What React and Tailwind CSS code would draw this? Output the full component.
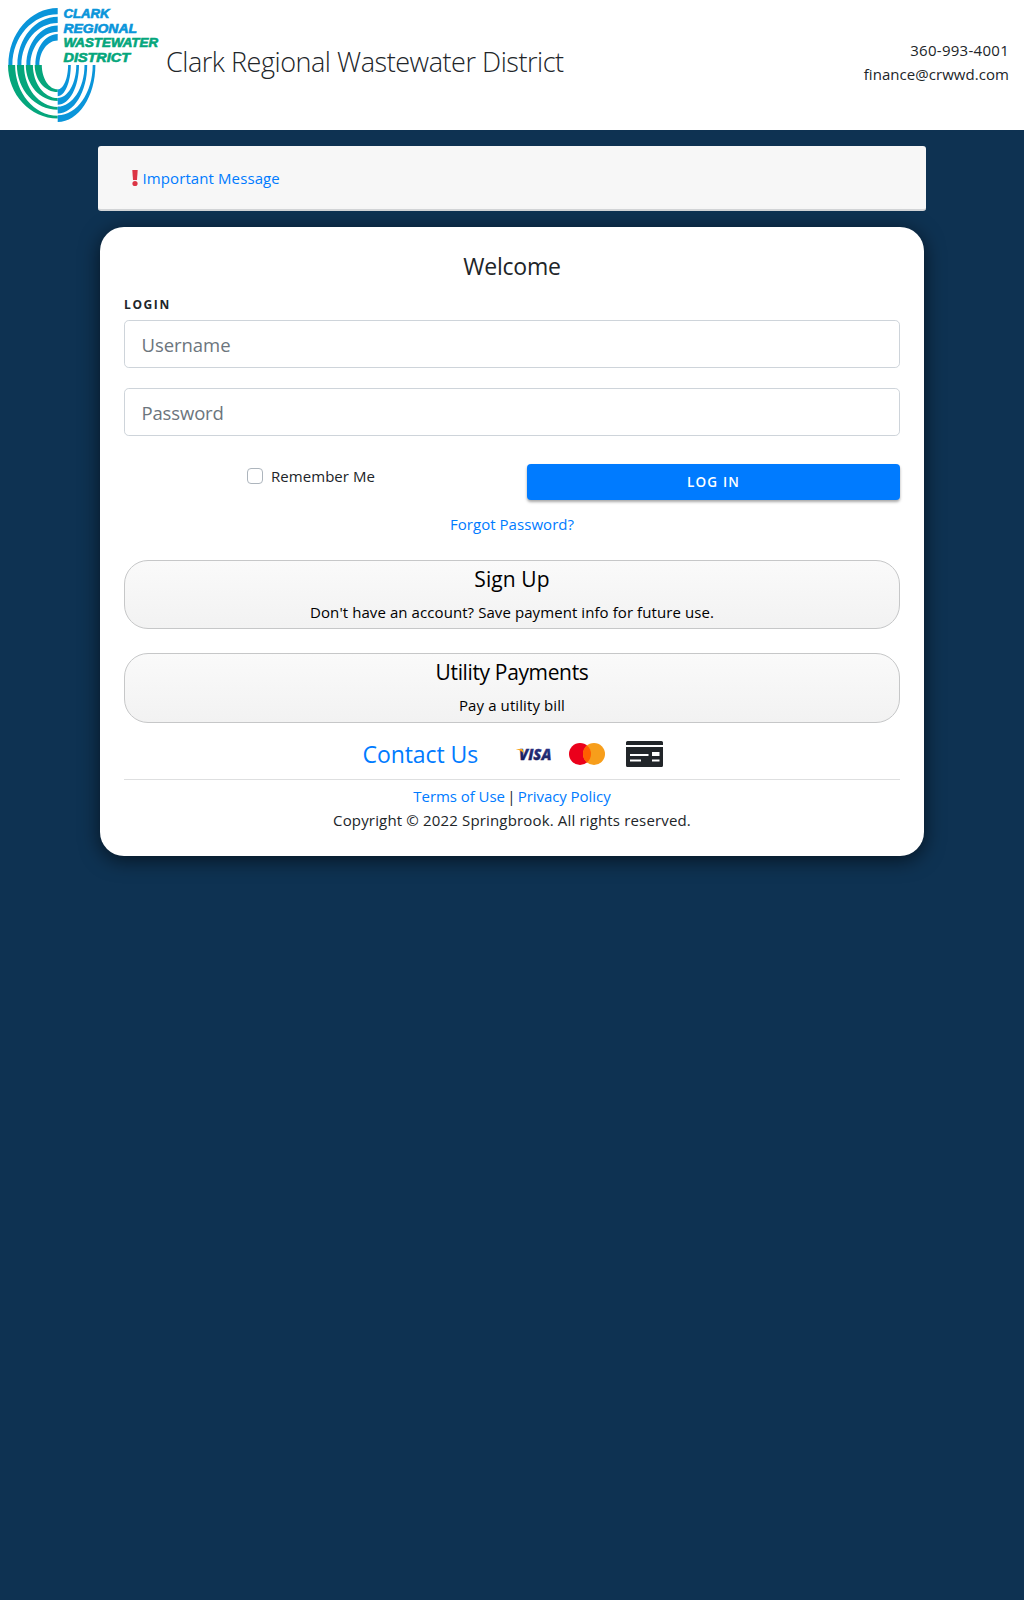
const CX = 57.7;
const CY = 65;

// Quarter ring around the logo's centre, tapering between its two ends.
function Ring({ sx, sy, oa, ob, ia, ib, fill }) {
  const k = 0.5523;
  const p = (x, y) => `${CX + sx * x} ${CY + sy * y}`;
  const d = `M${p(0, ob)}C${p(oa * k, ob)} ${p(oa, ob * k)} ${p(oa, 0)}L${p(ia, 0)}C${p(ia, ib * k)} ${p(ia * k, ib)} ${p(0, ib)}Z`;
  return <path d={d} fill={fill} />;
}

const BLUE = "#0a95da";
const GREEN = "#05a67c";

const words = [
  ["CLARK", 17.6, 46, BLUE],
  ["REGIONAL", 33.2, 73.5, BLUE],
  ["WASTEWATER", 46.6, 94.5, GREEN],
  ["DISTRICT", 61.8, 66.5, GREEN],
];

function Logo() {
  return (
    <svg width="160" height="130" viewBox="0 0 160 130" className="block shrink-0">
      {[0, 1, 2, 3].map((i) => (
        <g key={i}>
          <Ring sx={-1} sy={-1} oa={49.3 - i * 9} ob={57 - i * 8.7} ia={45.3 - i * 9} ib={50.7 - i * 8.7} fill={BLUE} />
          <Ring sx={-1} sy={1} oa={49.7 - i * 8.9} ob={53.5 - i * 8.8} ia={42.6 - i * 8.9} ib={50.7 - i * 8.8} fill={GREEN} />
          <Ring sx={1} sy={1} oa={37.7 - i * 8.2} ob={57 - i * 8.6} ia={35 - i * 8.2} ib={50.2 - i * 8.6} fill={BLUE} />
        </g>
      ))}
      {words.map(([t, y, w, c]) => (
        <text key={t} x="63.5" y={y} textLength={w} lengthAdjust="spacingAndGlyphs" fill={c} stroke={c} strokeWidth="0.6" className="font-['Liberation_Sans',sans-serif] text-[12px] font-bold italic">
          {t}
        </text>
      ))}
    </svg>
  );
}

function Cards() {
  return (
    <>
      <svg width="40" height="28" viewBox="0 -4 40 28" className="ml-[37.500px] mt-[5px] overflow-visible">
        <defs>
          <linearGradient id="visa" x1="0" y1="1" x2="0.3" y2="0">
            <stop offset="0" stopColor="#14174f" />
            <stop offset="1" stopColor="#293688" />
          </linearGradient>
        </defs>
        <text x="3" y="15" textLength="32.500" lengthAdjust="spacingAndGlyphs" fill="url(#visa)" stroke="url(#visa)" strokeWidth="0.3" className="font-['Open_Sans',sans-serif] text-[15.5px] font-extrabold italic">
          VISA
        </text>
        <path d="M0.2 4H5.4C6.2 4 6.8 4.400 7 5.200L7.800 9C6.600 6.600 4 4.900 0.200 4.300Z" fill="#f7a51c" />
      </svg>
      <svg width="36" height="22" viewBox="0 0 36 22" className="ml-[13.500px] mt-[7px]">
        <circle cx="11" cy="11" r="11" fill="#eb001b" />
        <circle cx="25" cy="11" r="11" fill="#f79e1b" />
        <path d="M18 2.5a11 11 0 0 1 0 17a11 11 0 0 1 0-17z" fill="#ff5f00" />
      </svg>
      <svg width="37" height="26" viewBox="0 0 37 26" className="ml-[21px] mt-[5px]">
        <path d="M1.5 0h34A1.5 1.5 0 0 1 37 1.5V4H0V1.5A1.5 1.5 0 0 1 1.5 0z" fill="#212529" />
        <path fillRule="evenodd" d="M0 6H37V24.5A1.5 1.5 0 0 1 35.5 26H1.5A1.5 1.5 0 0 1 0 24.500zM4 13v2H22.500v-2zM4 18.500v2H15v-2zM26 11v4H33.500v-4zM26 18.500v2H33.500v-2z" fill="#212529" />
      </svg>
    </>
  );
}

function Choice({ title, text, className, titleClass, textClass }) {
  return (
    <button type="button" className={`flex w-full flex-col items-center justify-start rounded-[24px] border border-[#c6c7c8] bg-linear-to-b from-[#fafafa] to-[#f2f2f2] pt-[5px] text-black ${className}`}>
      <span className={`block text-[21px] leading-[26px] ${titleClass}`}>{title}</span>
      <span className={`mt-2 block leading-6 ${textClass}`}>{text}</span>
    </button>
  );
}

export default function App() {
  return (
    <div className="min-h-[1600px] bg-[#0e3252] font-['Open_Sans','Noto_Sans',sans-serif] text-[15px] leading-6 text-[#212529]">
      <header className="flex h-[130px] bg-white">
        <Logo />
        <h1 className="ml-[6px] mt-[42px] whitespace-nowrap text-[27px] font-light leading-10 tracking-[-0.460px]">Clark Regional Wastewater District</h1>
        <div className="ml-auto mr-[15px] mt-[38px] text-right">
          <div className="tracking-[0.280px]">360-993-4001</div>
          <div className="tracking-[0.050px]">finance@crwwd.com</div>
        </div>
      </header>

      <section className="mx-[98px] mt-4 flex h-[65px] rounded-[3px] border-b-2 border-[#d3d5d7] bg-[#f7f7f7] pl-[34px] pt-5">
        <svg width="6" height="17" viewBox="0 0 6 17" className="mt-1">
          <path d="M0.300 0H5.700L5 10H1z" fill="#dc3545" />
          <circle cx="3" cy="13.500" r="2.600" fill="#dc3545" />
        </svg>
        <a href="#" className="ml-[4.500px] tracking-[0.100px] text-[#007bff]">Important Message</a>
      </section>

      <main className="mx-[100px] mt-4 h-[629px] rounded-[24px] bg-white px-6 pt-6 shadow-[0_4px_20px_rgba(0,0,0,0.6)]">
        <h2 className="mb-[15px] text-center text-[23px] leading-[30px] tracking-[-0.200px]">Welcome</h2>
        <div className="mb-[6px] text-[12px] font-bold leading-[18px] tracking-[1.600px]">LOGIN</div>
        <input type="text" placeholder="Username" className="mb-5 block h-12 w-full rounded-[4.800px] border border-[#ced4da] px-[16.500px] text-[18.500px] tracking-[-0.050px] placeholder:text-[#6c757d]" />
        <input type="password" placeholder="Password" className="block h-12 w-full rounded-[4.800px] border border-[#ced4da] px-[16.500px] text-[18.500px] tracking-[-0.150px] placeholder:text-[#6c757d]" />
        <div className="mt-7 flex h-9">
          <label className="flex w-[403px] pl-[123px]">
            <input type="checkbox" className="mt-1 size-4 appearance-none rounded-[4px] border border-[#adb5bd] bg-white" />
            <span className="ml-2 tracking-[0.050px]">Remember Me</span>
          </label>
          <button type="button" className="h-9 flex-1 rounded-[4px] bg-[#007bff] text-[13.500px] font-semibold tracking-[1.200px] text-white shadow-[0_2px_3px_rgba(0,0,0,0.35)]">LOG IN</button>
        </div>
        <div className="mb-6 mt-3 text-center">
          <a href="#" className="tracking-[0.050px] text-[#007bff]">Forgot Password?</a>
        </div>
        <Choice title="Sign Up" text="Don't have an account? Save payment info for future use." className="mb-6 h-[69px]" titleClass="tracking-[0.100px]" textClass="tracking-[0.080px]" />
        <Choice title="Utility Payments" text="Pay a utility bill" className="h-[70px]" titleClass="tracking-[-0.360px]" textClass="tracking-[0.100px]" />
        <div className="mt-[13px] flex h-[43px] pl-[238.500px]">
          <a href="#" className="w-[115.500px] whitespace-nowrap text-[23px] leading-9 tracking-[-0.080px] text-[#007bff]">Contact Us</a>
          <Cards />
        </div>
        <hr className="mb-1 border-[#dedfe0]" />
        <div className="text-center">
          <a href="#" className="tracking-[-0.050px] text-[#007bff]">Terms of Use</a><span className="mx-[-1.700px]"> | </span><a href="#" className="tracking-[-0.050px] text-[#007bff]">Privacy Policy</a>
        </div>
        <div className="text-center tracking-[0.160px]">Copyright © 2022 Springbrook. All rights reserved.</div>
      </main>
    </div>
  );
}
